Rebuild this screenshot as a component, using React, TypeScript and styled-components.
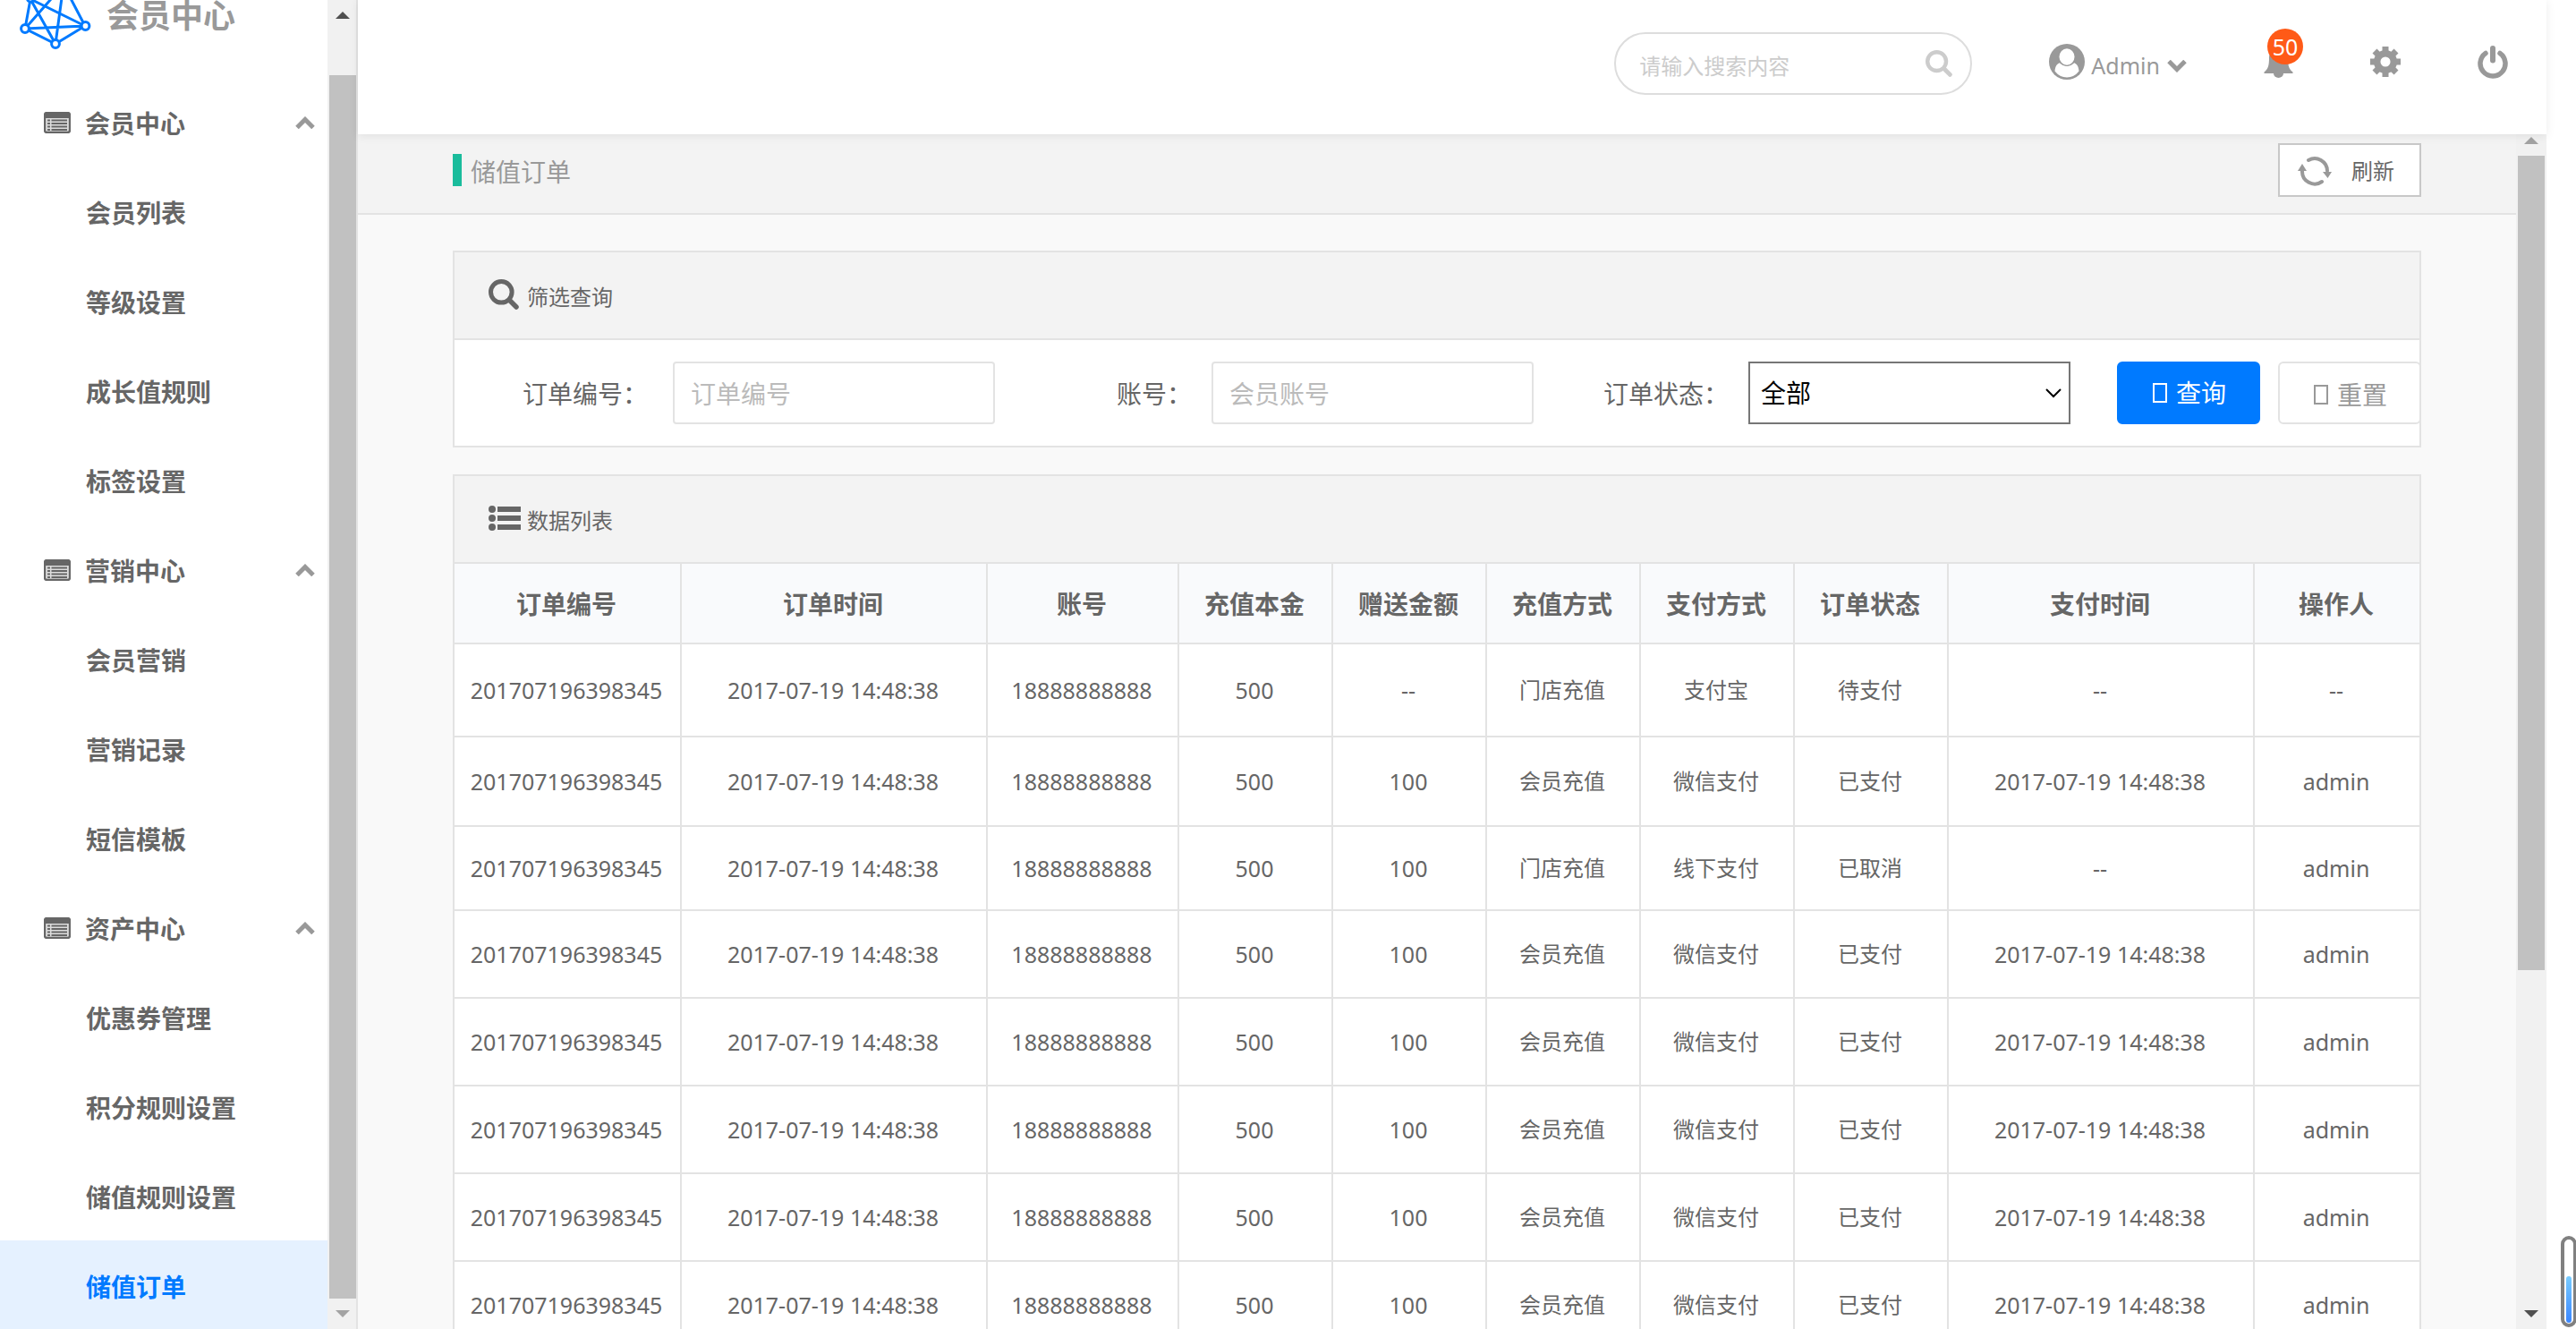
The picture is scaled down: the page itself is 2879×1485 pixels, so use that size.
import React from "react";
import styled, { createGlobalStyle } from "styled-components";

const color = {
  text: "#666",
  muted: "#999",
  faint: "#bbb",
  line: "#e3e3e3",
  panel: "#f3f3f3",
  page: "#f9f9f9",
  primary: "#007aff",
};

const GlobalStyle = createGlobalStyle`
  *, *::before, *::after { box-sizing: border-box; }
  body {
    margin: 0;
    background: #fff;
    color: ${color.text};
    font-family: "Noto Sans", "Noto Sans CJK SC", sans-serif;
    font-size: 28px;
    line-height: 40px;
    overflow: hidden;
  }
  button, input, select { font: inherit; color: inherit; margin: 0; }
  button { cursor: pointer; }
  svg { display: block; flex: none; }
`;

const Shell = styled.div`
  display: flex;
  height: 100vh;
  padding-right: 33px;
  overflow: hidden;
`;

/* ---------- sidebar ---------- */

const Sidebar = styled.aside`
  display: flex;
  flex: none;
  width: 400px;
  border-right: 2px solid ${color.line};
`;

const SidebarBody = styled.div`
  flex: 1;
  min-width: 0;
  overflow: hidden;
`;

const Brand = styled.div`
  display: flex;
  align-items: flex-start;
  gap: 15px;
  height: 86px;
  padding-left: 20px;
  color: ${color.muted};
  font-size: 36px;
  font-weight: 700;
  line-height: 36px;
`;

const MenuList = styled.ul`
  margin: 0;
  padding: 0;
  list-style: none;
`;

const GroupButton = styled.button`
  display: flex;
  align-items: center;
  gap: 16px;
  width: 100%;
  height: 100px;
  padding: 2px 14px 0 49px;
  border: 0;
  background: none;
  font-weight: 700;
  text-align: left;

  & > span { flex: 1; padding-top: 2px; }
`;

const MenuLink = styled.a<{ $active?: boolean }>`
  display: flex;
  align-items: center;
  height: 100px;
  padding: 4px 0 0 96px;
  background: ${(p) => (p.$active ? "#e5f1ff" : "transparent")};
  color: ${(p) => (p.$active ? color.primary : color.text)};
  font-weight: 700;
  text-decoration: none;
`;

/* ---------- scroll bars ---------- */

const ScrollTrack = styled.div<{ $width: number; $lift?: number }>`
  display: flex;
  flex: none;
  flex-direction: column;
  width: ${(p) => p.$width}px;
  margin-top: ${(p) => -(p.$lift ?? 0)}px;
  padding-left: 2px;
  background: #f1f1f1;
`;

const ScrollArrow = styled.button<{ $dim?: boolean }>`
  display: flex;
  align-items: center;
  justify-content: center;
  flex: none;
  width: 30px;
  height: 34px;
  padding: 0;
  border: 0;
  background: none;
  color: ${(p) => (p.$dim ? "#a3a3a3" : "#505050")};
`;

const ScrollLane = styled.div`
  display: flex;
  flex: 1;
  flex-direction: column;
`;

const ScrollSpace = styled.div<{ $share: number }>`
  flex: ${(p) => p.$share} 0 0;
`;

const ScrollThumb = styled.div<{ $share: number }>`
  flex: ${(p) => p.$share} 0 0;
  width: 30px;
  background: #c1c1c1;
`;

/* ---------- header ---------- */

const Main = styled.div`
  display: flex;
  flex: 1;
  flex-direction: column;
  min-width: 0;
`;

const Header = styled.header`
  position: relative;
  z-index: 1;
  display: flex;
  align-items: flex-start;
  justify-content: flex-end;
  flex: none;
  gap: 86px;
  height: 150px;
  padding: 36px 43px 0 0;
  background: #fff;
  color: ${color.muted};
  box-shadow: 0 2px 10px rgba(0, 0, 0, 0.08);
  font-size: 25px;
`;

const SearchBox = styled.label`
  display: flex;
  align-items: center;
  width: 400px;
  height: 70px;
  padding: 0 20px 0 26px;
  border: 2px solid #ddd;
  border-radius: 35px;
  color: #ccc;
`;

const SearchInput = styled.input`
  flex: 1;
  min-width: 0;
  height: 44px;
  padding: 4px 0 0;
  border: 0;
  outline: 0;
  background: none;
  color: ${color.text};
  font-size: 24px;

  &::placeholder { color: #ccc; opacity: 1; }
`;

const HeaderButton = styled.button`
  position: relative;
  display: flex;
  align-items: center;
  height: 66px;
  padding: 0;
  border: 0;
  background: none;
`;

const UserName = styled.span`
  padding: 8px 8px 0 7px;
`;

const ChevronBox = styled.i`
  padding-top: 10px;
`;

const Badge = styled.span`
  position: absolute;
  top: -4px;
  left: 4px;
  width: 40px;
  height: 40px;
  border-radius: 50%;
  background: #ff5a17;
  color: #fff;
  text-align: center;
`;

/* ---------- page ---------- */

const PageArea = styled.div`
  display: flex;
  flex: 1;
  min-height: 0;
`;

const Page = styled.main`
  flex: 1;
  min-width: 0;
  overflow: hidden;
  background: ${color.page};
`;

const TitleBar = styled.div`
  display: flex;
  align-items: flex-start;
  justify-content: space-between;
  height: 90px;
  padding: 10px 106px 0;
  border-bottom: 2px solid ${color.line};
  background: ${color.panel};
`;

const Title = styled.h1`
  height: 36px;
  margin: 12px 0 0;
  padding-left: 10px;
  border-left: 10px solid #1abc9c;
  color: ${color.muted};
  font-size: 28px;
  font-weight: 400;
  line-height: 40px;
`;

const RefreshButton = styled.button`
  display: flex;
  align-items: center;
  gap: 22px;
  width: 160px;
  height: 60px;
  padding: 2px 20px 0;
  border: 2px solid #c8c8c8;
  background: #fff;
  font-size: 24px;

  & > svg { color: ${color.muted}; }
`;

const Content = styled.div`
  display: flex;
  flex-direction: column;
  gap: 30px;
  padding: 40px 106px;
`;

const Panel = styled.section`
  border: 2px solid ${color.line};
  background: #fff;
`;

const PanelHead = styled.h2`
  display: flex;
  align-items: center;
  gap: 6px;
  height: 98px;
  margin: 0;
  padding-left: 38px;
  border-bottom: 2px solid ${color.line};
  background: ${color.panel};
  font-size: 24px;
  font-weight: 400;

  & > span { padding-top: 4px; }
`;

const PanelIcon = styled.i`
  display: flex;
  width: 37px;
  padding-bottom: 2px;
`;

const FilterForm = styled.form`
  display: flex;
  height: 118px;
  padding-top: 24px;
`;

const FieldLabel = styled.label<{ $width: number; $gap: number }>`
  flex: none;
  width: ${(p) => p.$width}px;
  padding-right: ${(p) => p.$gap}px;
  line-height: 72px;
  text-align: right;
`;

const TextField = styled.input`
  flex: none;
  width: 360px;
  height: 70px;
  padding: 2px 18px 0;
  border: 2px solid ${color.line};
  border-radius: 4px;
  outline: 0;
  background: #fff;

  &::placeholder { color: ${color.faint}; opacity: 1; }
`;

const SelectWrap = styled.div`
  position: relative;
  flex: none;
  width: 360px;
  height: 70px;
  color: #000;

  & > svg {
    position: absolute;
    top: 28px;
    right: 10px;
    pointer-events: none;
  }
`;

const SelectField = styled.select`
  appearance: none;
  width: 100%;
  height: 100%;
  padding: 0 12px;
  border: 2px solid #767676;
  border-radius: 0;
  outline: 0;
  background: #fff;
`;

const Actions = styled.div`
  display: flex;
  flex: none;
  gap: 20px;
  margin-left: 52px;
`;

const ActionButton = styled.button<{ $primary?: boolean }>`
  display: flex;
  align-items: center;
  justify-content: center;
  gap: 10px;
  width: 160px;
  height: 70px;
  padding: ${(p) => (p.$primary ? 0 : 4)}px 0 0 2px;
  border: 2px solid ${(p) => (p.$primary ? color.primary : color.line)};
  border-radius: 6px;
  background: ${(p) => (p.$primary ? color.primary : "#fff")};
  color: ${(p) => (p.$primary ? "#fff" : color.muted)};
`;

const Tofu = styled.i`
  width: 16px;
  height: 22px;
  border: 2px solid currentColor;
`;

const Table = styled.table`
  width: 100%;
  table-layout: fixed;
  border-collapse: separate;
  border-spacing: 0;
  text-align: center;
`;

const HeadCell = styled.th`
  height: 90px;
  padding: 2px 2px 0 0;
  border: solid ${color.line};
  border-width: 0 2px 2px 0;
  background: #f9fafc;
  font-weight: 700;

  &:last-child { border-right: 0; }
`;

const Row = styled.tr<{ $height: number }>`
  height: ${(p) => p.$height}px;
`;

const Cell = styled.td<{ $latin: boolean }>`
  padding: 0 2px 0 0;
  border: solid ${color.line};
  border-width: 0 2px 2px 0;
  font-size: ${(p) => (p.$latin ? 25 : 24)}px;
  white-space: nowrap;

  &:last-child { border-right: 0; }
`;

const Gauge = styled.div`
  position: fixed;
  right: -1px;
  bottom: 2px;
  display: flex;
  align-items: flex-end;
  width: 18px;
  height: 102px;
  padding: 1px 2px;
  border: 4px solid #808080;
  border-radius: 9px;
  background: #fff;
`;

const GaugeFill = styled.div`
  width: 100%;
  height: 52px;
  border-radius: 3px;
  background: linear-gradient(#78ccff, #3a86ff);
`;

/* ---------- icons ---------- */

const LogoMark = () => (
  <svg width="84" height="58" viewBox="20 0 84 58" fill="none" stroke={color.primary} strokeWidth="3">
    <path d="M28 32 95 29 62 49ZM28 32 34 -1 95 29M34 -1 62 49 71 -17ZM95 29 71 -17 28 32" />
    <g fill="#fff">
      <circle cx="28" cy="32" r="4.4" />
      <circle cx="95.500" cy="29" r="4.4" />
      <circle cx="62" cy="49" r="4.4" />
      <circle cx="34" cy="-1.500" r="3.500" />
    </g>
  </svg>
);

const ListCardIcon = () => (
  <svg width="30" height="24" viewBox="0 0 30 24">
    <rect x="1" y="1" width="28" height="22" rx="2.500" fill="#ddd" stroke="currentColor" strokeWidth="2.400" />
    <path d="M1 1h28v6H1z" fill="currentColor" />
    <path
      d="M4 9.500h3M8.500 9.500H26M4 13h3M8.500 13H26M4 16.500h3M8.500 16.500H26M4 20h3M8.500 20H26"
      stroke="currentColor"
      strokeWidth="2"
    />
  </svg>
);

const Chevron = ({ up }: { up?: boolean }) => (
  <svg width="22" height="14" viewBox="0 0 22 14" fill="none" stroke={color.muted} strokeWidth="5">
    <path d={up ? "M2 12.500 11 3.500 20 12.500" : "M2 1.500 11 10.500 20 1.500"} />
  </svg>
);

const SelectArrow = () => (
  <svg width="18" height="14" viewBox="0 0 18 14" fill="none" stroke="currentColor" strokeWidth="2">
    <path d="M1 3 9 11 17 3" />
  </svg>
);

const Triangle = ({ down }: { down?: boolean }) => (
  <svg width="16" height="8" viewBox="0 0 16 8" fill="currentColor">
    <path d={down ? "M0 0H16L8 8Z" : "M0 8H16L8 0Z"} />
  </svg>
);

const SearchIcon = ({ size }: { size: number }) => (
  <svg width={size} height={size} viewBox="0 0 34 34" fill="none" stroke="currentColor" strokeLinecap="round">
    <circle cx="14.300" cy="14.300" r="11.800" strokeWidth="5" />
    <path d="M23.500 23.500 31 31" strokeWidth="5.500" />
  </svg>
);

const ListIcon = () => (
  <svg width="36" height="28" viewBox="0 0 36 28" fill="currentColor">
    {[4, 14, 24].map((y) => (
      <g key={y}>
        <circle cx="4" cy={y} r="4" />
        <rect x="10" y={y - 3} width="26" height="6" />
      </g>
    ))}
  </svg>
);

const UserIcon = () => (
  <svg width="40" height="40" viewBox="0 0 40 40">
    <circle cx="20" cy="20" r="20" fill={color.muted} />
    <path d="M6.500 30.500C7 25 9 22 12.500 21Q20 28.500 27.500 21C31 22 33 25 33.500 30.500Q28 37.500 20 37.500T6.500 30.500Z" fill="#fff" />
    <circle cx="20" cy="14.500" r="10.500" fill={color.muted} />
    <ellipse cx="20" cy="14.500" rx="8.500" ry="9.300" fill="#fff" />
  </svg>
);

const BellIcon = () => (
  <svg width="33" height="36" viewBox="0 0 33 36" fill={color.muted}>
    <path d="M13.500 3a3 3 0 0 1 6 0C25 5 27 9 27 14c0 8 1 12 5.500 15.500V31H.5v-1.500C5 26 6 22 6 14 6 9 8 5 13.500 3Z" />
    <path d="M11 31a5.500 5 0 0 0 11 0Z" />
  </svg>
);

const GearIcon = () => (
  <svg width="34" height="34" viewBox="0 0 34 34" fill="none" stroke={color.muted}>
    <circle cx="17" cy="17" r="9.300" strokeWidth="7.500" />
    {[0, 45, 90, 135].map((a) => (
      <path key={a} d="M17 0V6M17 28V34" strokeWidth="7" transform={`rotate(${a} 17 17)`} />
    ))}
  </svg>
);

const PowerIcon = () => (
  <svg width="34" height="38" viewBox="0 0 34 38" fill="none" stroke={color.muted} strokeLinecap="round">
    <path d="M9 9.500A14 14 0 1 0 25 9.500" strokeWidth="5.500" />
    <path d="M17 4V17.500" strokeWidth="6" />
  </svg>
);

const RefreshIcon = () => (
  <svg width="38" height="34" viewBox="0 0 38 34" fill="none" stroke="currentColor" strokeWidth="4" strokeLinecap="round">
    <path d="M12 5A14 14 0 0 1 33 17" />
    <path d="M27 29A14 14 0 0 1 5 17" />
    <path d="M28 18H38L33.500 25ZM0 17H10L5 9Z" fill="currentColor" stroke="none" />
  </svg>
);

/* ---------- data ---------- */

const menu = [
  { name: "会员中心", items: ["会员列表", "等级设置", "成长值规则", "标签设置"] },
  { name: "营销中心", items: ["会员营销", "营销记录", "短信模板"] },
  { name: "资产中心", items: ["优惠券管理", "积分规则设置", "储值规则设置", "储值订单"] },
];
const current = "储值订单";

const columns = [
  { title: "订单编号", width: 254 },
  { title: "订单时间", width: 342 },
  { title: "账号", width: 214 },
  { title: "充值本金", width: 172 },
  { title: "赠送金额", width: 172 },
  { title: "充值方式", width: 172 },
  { title: "支付方式", width: 172 },
  { title: "订单状态", width: 172 },
  { title: "支付时间", width: 342 },
  { title: "操作人", width: 184 },
];

const time = "2017-07-19 14:48:38";
const order = (bonus: string, source: string, pay: string, status: string, paidAt: string, by: string, height = 98) => ({
  height,
  cells: ["201707196398345", time, "18888888888", "500", bonus, source, pay, status, paidAt, by],
});
const paid = () => order("100", "会员充值", "微信支付", "已支付", time, "admin");

const orders = [
  order("--", "门店充值", "支付宝", "待支付", "--", "--", 104),
  order("100", "会员充值", "微信支付", "已支付", time, "admin", 100),
  order("100", "门店充值", "线下支付", "已取消", "--", "admin", 94),
  paid(),
  paid(),
  paid(),
  paid(),
  paid(),
];

const isLatin = (value: string) => /^[\w\s:-]+$/.test(value);

const Scrollbar = (p: { width: number; lift?: number; before: number; thumb: number; after: number }) => (
  <ScrollTrack $width={p.width} $lift={p.lift}>
    <ScrollArrow type="button" aria-label="向上滚动" $dim={p.before === 0}>
      <Triangle />
    </ScrollArrow>
    <ScrollLane>
      <ScrollSpace $share={p.before} />
      <ScrollThumb $share={p.thumb} />
      <ScrollSpace $share={p.after} />
    </ScrollLane>
    <ScrollArrow type="button" aria-label="向下滚动" $dim={p.after === 0}>
      <Triangle down />
    </ScrollArrow>
  </ScrollTrack>
);

export default function App() {
  return (
    <>
      <GlobalStyle />
      <Shell>
        <Sidebar>
          <SidebarBody>
            <Brand>
              <LogoMark />
              <span>会员中心</span>
            </Brand>
            <nav>
              <MenuList>
                {menu.map((group) => (
                  <li key={group.name}>
                    <GroupButton type="button" aria-expanded="true">
                      <ListCardIcon />
                      <span>{group.name}</span>
                      <Chevron up />
                    </GroupButton>
                    <MenuList>
                      {group.items.map((item) => (
                        <li key={item}>
                          <MenuLink href="#" $active={item === current}>
                            {item}
                          </MenuLink>
                        </li>
                      ))}
                    </MenuList>
                  </li>
                ))}
              </MenuList>
            </nav>
          </SidebarBody>
          <Scrollbar width={32} before={50} thumb={1367} after={0} />
        </Sidebar>

        <Main>
          <Header>
            <SearchBox>
              <SearchInput type="text" placeholder="请输入搜索内容" aria-label="搜索" />
              <SearchIcon size={30} />
            </SearchBox>
            <HeaderButton type="button">
              <UserIcon />
              <UserName>Admin</UserName>
              <ChevronBox>
                <Chevron />
              </ChevronBox>
            </HeaderButton>
            <HeaderButton type="button" aria-label="消息">
              <BellIcon />
              <Badge>50</Badge>
            </HeaderButton>
            <HeaderButton type="button" aria-label="设置">
              <GearIcon />
            </HeaderButton>
            <HeaderButton type="button" aria-label="退出">
              <PowerIcon />
            </HeaderButton>
          </Header>

          <PageArea>
            <Page>
              <TitleBar>
                <Title>储值订单</Title>
                <RefreshButton type="button">
                  <RefreshIcon />
                  刷新
                </RefreshButton>
              </TitleBar>
              <Content>
                <Panel>
                  <PanelHead>
                    <PanelIcon>
                      <SearchIcon size={34} />
                    </PanelIcon>
                    <span>筛选查询</span>
                  </PanelHead>
                  <FilterForm>
                    <FieldLabel htmlFor="order-no" $width={244} $gap={28}>
                      订单编号：
                    </FieldLabel>
                    <TextField id="order-no" type="text" placeholder="订单编号" />
                    <FieldLabel htmlFor="account" $width={242} $gap={22}>
                      账号：
                    </FieldLabel>
                    <TextField id="account" type="text" placeholder="会员账号" />
                    <FieldLabel htmlFor="status" $width={240} $gap={22}>
                      订单状态：
                    </FieldLabel>
                    <SelectWrap>
                      <SelectField id="status" defaultValue="全部">
                        <option>全部</option>
                        <option>待支付</option>
                        <option>已支付</option>
                        <option>已取消</option>
                      </SelectField>
                      <SelectArrow />
                    </SelectWrap>
                    <Actions>
                      <ActionButton type="button" $primary>
                        <Tofu />
                        查询
                      </ActionButton>
                      <ActionButton type="reset">
                        <Tofu />
                        重置
                      </ActionButton>
                    </Actions>
                  </FilterForm>
                </Panel>

                <Panel>
                  <PanelHead>
                    <PanelIcon>
                      <ListIcon />
                    </PanelIcon>
                    <span>数据列表</span>
                  </PanelHead>
                  <Table>
                    <colgroup>
                      {columns.map((c) => (
                        <col key={c.title} style={{ width: c.width }} />
                      ))}
                    </colgroup>
                    <thead>
                      <tr>
                        {columns.map((c) => (
                          <HeadCell key={c.title} scope="col">
                            {c.title}
                          </HeadCell>
                        ))}
                      </tr>
                    </thead>
                    <tbody>
                      {orders.map((o, i) => (
                        <Row key={i} $height={o.height}>
                          {o.cells.map((value, j) => (
                            <Cell key={j} $latin={isLatin(value)}>
                              {value}
                            </Cell>
                          ))}
                        </Row>
                      ))}
                    </tbody>
                  </Table>
                </Panel>
              </Content>
            </Page>
            <Scrollbar width={34} lift={10} before={0} thumb={910} after={367} />
          </PageArea>
        </Main>
      </Shell>
      <Gauge>
        <GaugeFill />
      </Gauge>
    </>
  );
}
